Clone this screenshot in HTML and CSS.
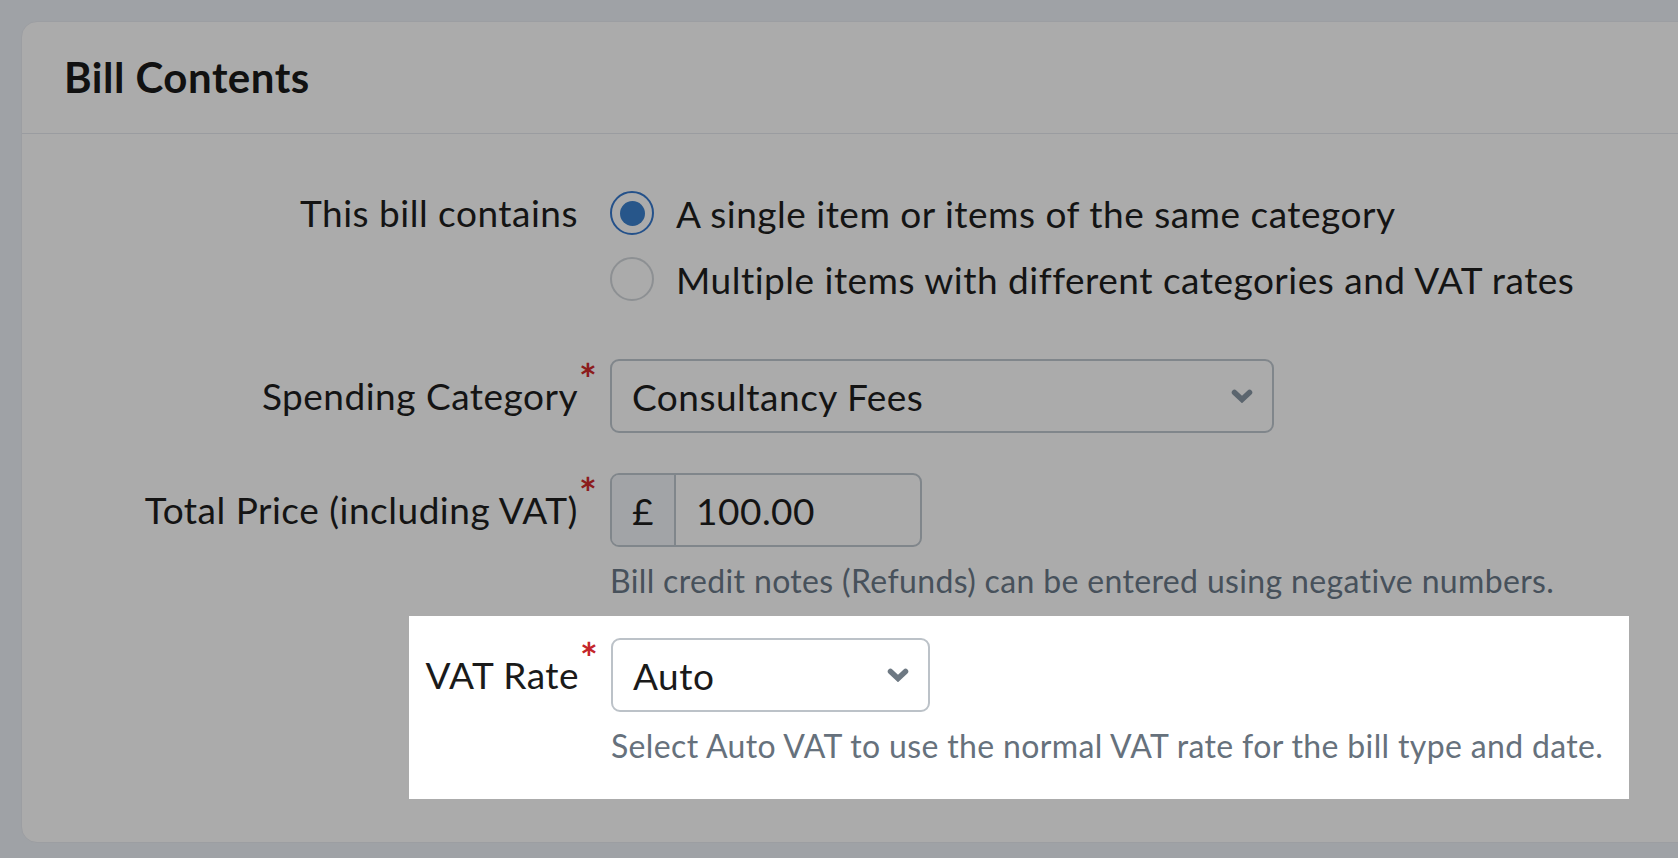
FILE: index.html
```html
<!DOCTYPE html>
<html lang="en">
<head>
<meta charset="utf-8">
<title>Bill Contents</title>
<link rel="stylesheet" href="styles.css">
</head>
<body>
<div class="card">
  <div class="card-header">
    <h2 class="card-title">Bill Contents</h2>
  </div>
  <div class="card-body">
    <div class="form-row form-row-radio">
      <div class="form-label"><span class="label-text">This bill contains</span></div>
      <div class="form-control">
        <div class="radio-option">
          <span class="radio radio-checked"><span class="radio-dot"></span></span>
          <span class="radio-text">A single item or items of the same category</span>
        </div>
        <div class="radio-option">
          <span class="radio"></span>
          <span class="radio-text">Multiple items with different categories and VAT rates</span>
        </div>
      </div>
    </div>

    <div class="form-row form-row-spending">
      <div class="form-label"><span class="label-text">Spending Category<span class="req">*</span></span></div>
      <div class="form-control">
        <div class="select select-wide">
          <span class="select-value">Consultancy Fees</span>
          <svg class="chevron" width="22" height="14" viewBox="0 0 22 14"><path d="M3.5 3.5 L11 10.5 L18.5 3.5" fill="none" stroke="currentColor" stroke-width="5.5" stroke-linecap="round" stroke-linejoin="miter"/></svg>
        </div>
      </div>
    </div>

    <div class="form-row form-row-price">
      <div class="form-label"><span class="label-text">Total Price (including VAT)<span class="req">*</span></span></div>
      <div class="form-control">
        <div class="input-group">
          <span class="input-addon">£</span>
          <span class="input-value">100.00</span>
        </div>
        <div class="help">Bill credit notes (Refunds) can be entered using negative numbers.</div>
      </div>
    </div>

    <div class="form-row form-row-vat highlight">
      <div class="form-label"><span class="label-text">VAT Rate<span class="req">*</span></span></div>
      <div class="form-control">
        <div class="select select-narrow">
          <span class="select-value">Auto</span>
          <svg class="chevron" width="22" height="14" viewBox="0 0 22 14"><path d="M3.5 3.5 L11 10.5 L18.5 3.5" fill="none" stroke="currentColor" stroke-width="5.5" stroke-linecap="round" stroke-linejoin="miter"/></svg>
        </div>
        <div class="help">Select Auto VAT to use the normal VAT rate for the bill type and date.</div>
      </div>
    </div>
  </div>
</div>
</body>
</html>
```

FILE: styles.css
```css
html, body {
  margin: 0;
  padding: 0;
}

body {
  background: #9fa2a6;
  font-family: "Lato", "Liberation Sans", sans-serif;
  color: #141414;
  overflow: hidden;
  width: 1678px;
  height: 858px;
}

.card {
  margin: 21px 0 0 21px;
  width: 1720px;
  background: #ababab;
  border: 1px solid #9c9ea2;
  border-radius: 16px;
  box-sizing: border-box;
}

.card-header {
  height: 111px;
  border-bottom: 1px solid #9a9ca0;
  display: flex;
  align-items: center;
  padding: 0 42px;
}

.card-title {
  margin: 0;
  font-size: 42px;
  font-weight: 700;
  letter-spacing: 0.5px;
  color: #111;
  line-height: 1.2;
}

.card-body {
  padding: 46px 0 43px 0;
}

.form-row {
  display: flex;
  align-items: flex-start;
}

.form-label {
  width: 514px;
  margin-left: 42px;
  text-align: right;
  font-size: 37px;
  letter-spacing: 0.5px;
  line-height: 74px;
  white-space: nowrap;
  color: #141414;
  flex-shrink: 0;
}

.form-row-radio .form-label {
  line-height: 66px;
}

.label-text {
  position: relative;
}

.req {
  position: absolute;
  left: 100%;
  top: -15px;
  margin-left: 1px;
  font-size: 42px;
  line-height: 1;
  font-weight: 700;
  letter-spacing: 0;
  color: #8c1c1c;
}

.form-control {
  margin-left: 32px;
  display: flex;
  flex-direction: column;
  align-items: flex-start;
}

.radio-option {
  display: flex;
  align-items: center;
  height: 66px;
  gap: 22px;
  font-size: 37px;
  letter-spacing: 0.5px;
  white-space: nowrap;
}

.radio {
  width: 44px;
  height: 44px;
  box-sizing: border-box;
  border: 2px solid #8d9093;
  border-radius: 50%;
  display: flex;
  align-items: center;
  justify-content: center;
  flex-shrink: 0;
}

.radio-checked {
  border-color: #24518a;
}

.radio-dot {
  width: 25px;
  height: 25px;
  border-radius: 50%;
  background: #27568a;
}

.form-row-spending {
  margin-top: 47px;
}

.form-row-price {
  margin-top: 40px;
}

.select {
  height: 74px;
  box-sizing: border-box;
  border: 2px solid #80868b;
  border-radius: 9px;
  display: flex;
  align-items: center;
  justify-content: space-between;
  padding: 0 19px 0 20px;
  font-size: 37px;
  letter-spacing: 0.5px;
  color: #141414;
}

.select-wide {
  width: 664px;
}

.select-narrow {
  width: 319px;
}

.chevron {
  color: #5b656e;
  display: block;
}

.input-group {
  height: 74px;
  width: 312px;
  box-sizing: border-box;
  border: 2px solid #80868b;
  border-radius: 9px;
  display: flex;
  align-items: stretch;
  font-size: 37px;
  letter-spacing: 0.5px;
  overflow: hidden;
}

.input-addon {
  width: 62px;
  flex-shrink: 0;
  background: #a2a4a7;
  border-right: 2px solid #80868b;
  display: flex;
  align-items: center;
  justify-content: center;
}

.input-value {
  display: flex;
  align-items: center;
  padding-left: 20px;
}

.help {
  margin-top: 13px;
  font-size: 32px;
  letter-spacing: 0.35px;
  line-height: 42px;
  color: #47515b;
  white-space: nowrap;
}

.highlight {
  margin-top: 14px;
  margin-left: 387px;
  width: 1220px;
  box-sizing: border-box;
  background: #ffffff;
  padding: 22px 0 32px 0;
}

.highlight .form-label {
  width: 170px;
  margin-left: 0;
  color: #1a1a1a;
}

.highlight .req {
  color: #c4262b;
}

.highlight .select {
  border-color: #bcc2c8;
  color: #1a1a1a;
}

.highlight .chevron {
  color: #6e7983;
}

.highlight .help {
  color: #66717c;
}
```
